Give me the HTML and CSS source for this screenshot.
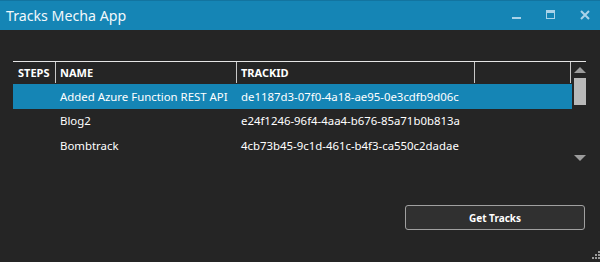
FILE: index.html
```html
<!DOCTYPE html>
<html lang="en">
<head>
    <meta charset="UTF-8">
    <title>Tracks Mecha App</title>
    <link rel="stylesheet" href="styles.css">
</head>
<body>
    <div class="window">
        <div class="titlebar">
            <div class="title">Tracks Mecha App</div>
            <div class="controls">
                <span class="ctl">
                    <svg width="10" height="10" viewBox="0 0 10 10"><rect x="0" y="7" width="9" height="2" fill="#a9d3e9"/></svg>
                </span>
                <span class="ctl">
                    <svg width="10" height="10" viewBox="0 0 10 10"><rect x="0.5" y="0.5" width="8" height="8" fill="none" stroke="#a9d3e9"/><rect x="0" y="0" width="9" height="3" fill="#a9d3e9"/></svg>
                </span>
                <span class="ctl">
                    <svg width="10" height="10" viewBox="0 0 10 10"><path d="M1 1 L9 9 M9 1 L1 9" stroke="#a9d3e9" stroke-width="2"/></svg>
                </span>
            </div>
        </div>

        <div class="content">
            <div class="grid">
                <div class="table">
                    <div class="row head">
                        <div class="cell steps">STEPS</div>
                        <div class="cell name">NAME</div>
                        <div class="cell trackid">TRACKID</div>
                        <div class="cell filler"></div>
                    </div>
                    <div class="row selected">
                        <div class="cell steps"></div>
                        <div class="cell name">Added Azure Function REST API</div>
                        <div class="cell trackid">de1187d3-07f0-4a18-ae95-0e3cdfb9d06c</div>
                    </div>
                    <div class="row">
                        <div class="cell steps"></div>
                        <div class="cell name">Blog2</div>
                        <div class="cell trackid">e24f1246-96f4-4aa4-b676-85a71b0b813a</div>
                    </div>
                    <div class="row">
                        <div class="cell steps"></div>
                        <div class="cell name">Bombtrack</div>
                        <div class="cell trackid">4cb73b45-9c1d-461c-b4f3-ca550c2dadae</div>
                    </div>
                </div>
                <div class="scrollbar">
                    <div class="arrow up"></div>
                    <div class="thumb"></div>
                    <div class="arrow down"></div>
                </div>
            </div>

            <div class="actions">
                <button class="btn">Get Tracks</button>
            </div>
        </div>

        <svg class="grip" width="10" height="10" viewBox="0 0 10 10">
            <g fill="#9a9a9a">
                <rect x="8" y="0" width="2" height="2"/>
                <rect x="5" y="3" width="2" height="2"/><rect x="8" y="3" width="2" height="2"/>
                <rect x="2" y="6" width="2" height="2"/><rect x="5" y="6" width="2" height="2"/><rect x="8" y="6" width="2" height="2"/>
            </g>
        </svg>
    </div>
</body>
</html>
```

FILE: styles.css
```css
* {
    margin: 0;
    padding: 0;
    box-sizing: border-box;
}

body {
    font-family: "Noto Sans", "Open Sans", sans-serif;
    background: #252525;
    color: #ffffff;
    width: 600px;
    height: 262px;
    overflow: hidden;
}

.window {
    position: relative;
    height: 262px;
}

.titlebar {
    height: 30px;
    background: #1585b5;
    border-top: 1px solid #1274a0;
    display: flex;
    align-items: center;
    justify-content: space-between;
}

.title {
    font-size: 14.2px;
    color: #f2f8fb;
    padding-left: 6px;
    margin-top: -1px;
}

.controls {
    display: flex;
    align-items: center;
    padding-right: 10px;
    gap: 24px;
    margin-top: -2px;
}

.ctl {
    display: block;
    width: 10px;
    height: 10px;
}

.ctl svg {
    display: block;
}

.content {
    padding: 31px 14px 0 13px;
}

.grid {
    display: flex;
    border-top: 1px solid #e6e6e6;
}

.table {
    width: 559px;
}

.row {
    display: flex;
    height: 24.5px;
    align-items: center;
    font-size: 11.4px;
}

.row.head {
    height: 21px;
    align-items: stretch;
    font-weight: bold;
    font-size: 11px;
    margin-bottom: 1px;
}

.row.head .cell {
    border-right: 1px solid #c8c8c8;
    display: flex;
    align-items: center;
}

.row.selected {
    background: #1585b5;
}

.cell {
    white-space: nowrap;
    overflow: hidden;
    height: 100%;
    display: flex;
    align-items: center;
}

.steps {
    width: 43px;
    padding-left: 5px;
}

.name {
    width: 181px;
    padding-left: 4px;
}

.trackid {
    width: 238px;
    padding-left: 4px;
}

.filler {
    width: 96px;
}

.scrollbar {
    width: 14px;
    height: 101px;
    display: flex;
    flex-direction: column;
    align-items: center;
    padding-left: 1px;
}

.arrow {
    width: 0;
    height: 0;
    border-left: 6px solid transparent;
    border-right: 6px solid transparent;
}

.arrow.up {
    border-bottom: 6px solid #9c9c9c;
    margin-top: 5px;
}

.thumb {
    width: 12px;
    height: 27px;
    background: #b9b9b9;
    margin-top: 5px;
}

.arrow.down {
    border-top: 6px solid #9c9c9c;
    margin-top: auto;
    margin-bottom: 2px;
}

.actions {
    display: flex;
    justify-content: flex-end;
    margin-top: 42px;
    padding-right: 1px;
}

.btn {
    width: 180px;
    height: 25px;
    background: #303030;
    border: 1px solid #a0a0a0;
    border-radius: 3px;
    color: #ffffff;
    font-family: "Noto Sans", "Open Sans", sans-serif;
    font-weight: bold;
    font-size: 10px;
}

.grip {
    position: absolute;
    right: 0;
    bottom: 1px;
}
```
